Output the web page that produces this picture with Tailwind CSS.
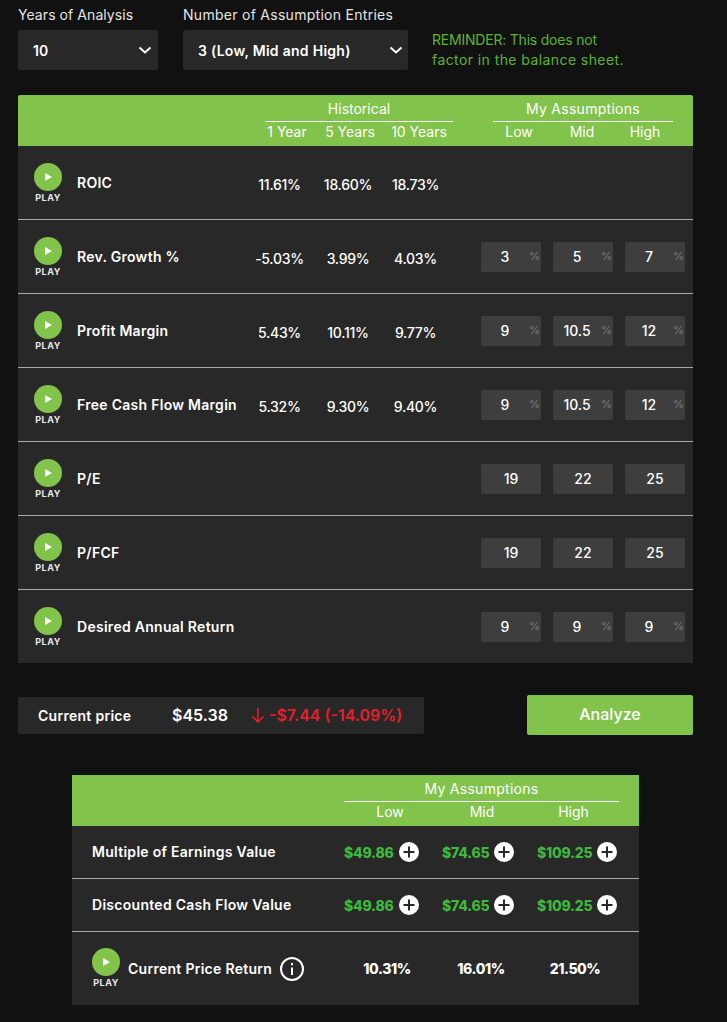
<!DOCTYPE html>
<html lang="en">
<head>
<meta charset="UTF-8" />
<meta name="viewport" content="width=device-width, initial-scale=1.0" />
<title>Stock Analyzer</title>
<script src="https://cdn.jsdelivr.net/npm/@tailwindcss/browser@4"></script>
</head>
<body class="bg-[#111111] text-white font-['Inter',sans-serif] h-[1022px] overflow-hidden">

<!-- Top controls -->
<section class="flex pl-[18px] pt-[6px]">
  <div class="w-[140px] mr-[25px]">
    <p class="text-[14px] leading-[18px] tracking-[0.005em] text-[#e4e4e4] h-[24px]">Years of Analysis</p>
    <div class="h-[40px] rounded-[2px] bg-[#282828] flex items-center justify-between pl-[15px] pr-[6px] text-[14px] font-semibold">
      <span>10</span>
      <svg class="w-[14px] h-[10px]" viewBox="0 0 14 10" fill="none" stroke="white" stroke-width="2"><path d="M1.5 2.5 7 7.5l5.5-5"/></svg>
    </div>
  </div>
  <div class="w-[225px] mr-[24px]">
    <p class="text-[14px] leading-[18px] tracking-[0.02em] text-[#e4e4e4] h-[24px] whitespace-nowrap">Number of Assumption Entries</p>
    <div class="h-[40px] rounded-[2px] bg-[#282828] flex items-center justify-between pl-[15px] pr-[5px] text-[14px] font-semibold">
      <span class="tracking-[0.02em]">3 (Low, Mid and High)</span>
      <svg class="w-[14px] h-[10px]" viewBox="0 0 14 10" fill="none" stroke="white" stroke-width="2"><path d="M1.5 2.5 7 7.5l5.5-5"/></svg>
    </div>
  </div>
  <p class="pt-[24px] text-[14px] leading-[20px] text-[#5cb338]"><span class="tracking-[-0.015em]">REMINDER: This does not</span><br><span class="tracking-[0.03em]">factor in the balance sheet.</span></p>
</section>

<!-- Assumptions table -->
<section class="mx-[18px] mt-[25px] w-[675px] rounded-t-[2px] overflow-hidden">
  <div class="h-[51px] bg-[#82c34b] grid grid-cols-[247px_188px_40px_180px] pt-[5px] text-[14px]">
    <div></div>
    <div>
      <p class="h-[20px] leading-[18px] text-center border-b border-white box-content pb-[1px]">Historical</p>
      <div class="grid grid-cols-[44px_82px_56px] leading-[20px] text-center">
        <span class="whitespace-nowrap">1 Year</span><span class="whitespace-nowrap">5 Years</span><span class="whitespace-nowrap">10 Years</span>
      </div>
    </div>
    <div></div>
    <div>
      <p class="h-[20px] leading-[18px] text-center border-b border-white box-content pb-[1px] tracking-[0.02em]">My Assumptions</p>
      <div class="grid grid-cols-[52px_74px_52px] leading-[20px] text-center">
        <span>Low</span><span>Mid</span><span>High</span>
      </div>
    </div>
  </div>
  <div id="rows" class="bg-[#282828]"></div>
</section>

<!-- Price bar -->
<section class="flex items-center justify-between mx-[18px] w-[675px] mt-[32px] h-[40px]">
  <div class="w-[406px] h-[37px] rounded-[2px] bg-[#282828] flex items-center pl-[20px]">
    <span class="w-[134px] text-[14px] font-semibold tracking-[0.02em]">Current price</span>
    <span class="w-[79px] text-[16px] font-semibold">$45.38</span>
    <svg class="w-[14px] h-[16px] mr-[4px]" viewBox="0 0 14 16" fill="none" stroke="#e3202c" stroke-width="1.6"><path d="M7 1v14M1.5 9.5 7 15l5.5-5.5"/></svg>
    <span class="text-[16px] font-semibold text-[#e3202c] whitespace-nowrap">-$7.44 (-14.09%)</span>
  </div>
  <button class="w-[166px] h-[40px] rounded-[2px] bg-[#82c34b] text-[16px] font-medium pb-[2px]">Analyze</button>
</section>

<!-- Results table -->
<section class="ml-[72px] mt-[40px] w-[567px]">
  <div class="h-[51px] bg-[#82c34b] grid grid-cols-[272px_275px] pt-[5px] text-[14px]">
    <div></div>
    <div>
      <p class="h-[20px] leading-[18px] text-center border-b border-white box-content pb-[1px] tracking-[0.02em]">My Assumptions</p>
      <div class="grid grid-cols-[92px_92px_91px] leading-[20px] text-center">
        <span>Low</span><span>Mid</span><span>High</span>
      </div>
    </div>
  </div>
  <div id="results" class="bg-[#282828]"></div>
  <div class="h-[73px] bg-[#282828] grid grid-cols-[268px_94px_94px_94px] items-center">
    <div class="self-start flex items-start pl-[20px] pt-[16px]">
      <div class="w-[28px] flex flex-col items-center">
        <span class="w-[28px] h-[28px] rounded-full bg-[#82c34b] flex items-center justify-center">
          <svg class="w-[10px] h-[10px]" viewBox="0 0 10 10" fill="white"><path d="M2 1l7 4-7 4z"/></svg>
        </span>
        <span class="text-[9px] leading-[14px] font-bold tracking-[0.06em] text-[#e8e8e8]">PLAY</span>
      </div>
      <span class="ml-[8px] mt-[11px] leading-[20px] text-[14px] font-semibold whitespace-nowrap tracking-[0.02em]">Current Price Return</span>
      <svg class="w-[24px] h-[24px] ml-[8px] mt-[9px] shrink-0" viewBox="0 0 24 24" fill="none" stroke="white" stroke-width="2"><circle cx="12" cy="12" r="11"/><path d="M12 10.5v7.5"/><path d="M12 6v2.2"/></svg>
    </div>
    <span class="text-center text-[14px] font-extrabold tracking-[-0.03em]">10.31%</span>
    <span class="text-center text-[14px] font-extrabold tracking-[-0.03em]">16.01%</span>
    <span class="text-center text-[14px] font-extrabold tracking-[-0.03em]">21.50%</span>
  </div>
</section>

<script>
const tableRows = [
  { name: 'ROIC', hist: ['11.61%', '18.60%', '18.73%'], inputs: null },
  { name: 'Rev. Growth %', hist: ['-5.03%', '3.99%', '4.03%'], inputs: ['3', '5', '7'], pct: true },
  { name: 'Profit Margin', hist: ['5.43%', '10.11%', '9.77%'], inputs: ['9', '10.5', '12'], pct: true },
  { name: 'Free Cash Flow Margin', hist: ['5.32%', '9.30%', '9.40%'], inputs: ['9', '10.5', '12'], pct: true },
  { name: 'P/E', hist: ['', '', ''], inputs: ['19', '22', '25'] },
  { name: 'P/FCF', hist: ['', '', ''], inputs: ['19', '22', '25'] },
  { name: 'Desired Annual Return', hist: ['', '', ''], inputs: ['9', '9', '9'], pct: true }
];

const playBlock = `
  <div class="w-[28px] flex flex-col items-center">
    <span class="w-[28px] h-[28px] rounded-full bg-[#82c34b] flex items-center justify-center">
      <svg class="w-[10px] h-[10px]" viewBox="0 0 10 10" fill="white"><path d="M2 1l7 4-7 4z"/></svg>
    </span>
    <span class="text-[9px] leading-[13px] font-bold tracking-[0.06em] text-[#e8e8e8]">PLAY</span>
  </div>`;

function renderInput(value, pct) {
  if (pct) {
    return `<div class="w-[60px] h-[30px] rounded-[2px] bg-[#3e3e3e] flex items-center text-[14px] font-medium">
      <span class="w-[48px] text-center">${value}</span><span class="text-[11px] text-[#777777]">%</span></div>`;
  }
  return `<div class="w-[60px] h-[30px] rounded-[2px] bg-[#3e3e3e] flex items-center justify-center text-[14px] font-medium">${value}</div>`;
}

document.getElementById('rows').innerHTML = tableRows.map((row, i) => `
  <div class="${i < 6 ? 'h-[74px] border-b border-[#aaaaaa]' : 'h-[73px]'} grid grid-cols-[227px_69px_68px_67px_1fr] items-center">
    <div class="self-start flex items-start pl-[16px] pt-[17px]">
      ${playBlock}
      <span class="ml-[15px] mt-[10px] leading-[20px] text-[14px] font-semibold whitespace-nowrap tracking-[0.02em]">${row.name}</span>
    </div>
    ${row.hist.map(h => `<span class="text-center text-[14px] font-medium pt-[3px] tracking-[-0.02em]">${h}</span>`).join('')}
    <div class="flex gap-[12px] pl-[32px]">${row.inputs ? row.inputs.map(v => renderInput(v, row.pct)).join('') : ''}</div>
  </div>`).join('');

const resultRows = ['Multiple of Earnings Value', 'Discounted Cash Flow Value'];
const values = ['$49.86', '$74.65', '$109.25'];

function renderValue(value) {
  return `<div class="flex items-center gap-[5px]">
    <span class="text-[14px] font-extrabold tracking-[-0.015em] text-[#3fb83f]">${value}</span>
    <svg class="w-[20px] h-[20px] shrink-0" viewBox="0 0 20 20"><circle cx="10" cy="10" r="10" fill="white"/><path d="M10 4.5v11M4.5 10h11" stroke="#282828" stroke-width="2"/></svg>
  </div>`;
}

document.getElementById('results').innerHTML = resultRows.map(name => `
  <div class="h-[53px] border-b border-[#aaaaaa] grid grid-cols-[272px_98px_95px_1fr] items-center">
    <span class="pl-[20px] pb-[2px] text-[14px] font-semibold whitespace-nowrap tracking-[0.02em]">${name}</span>
    ${values.map(renderValue).join('')}
  </div>`).join('');
</script>
</body>
</html>
